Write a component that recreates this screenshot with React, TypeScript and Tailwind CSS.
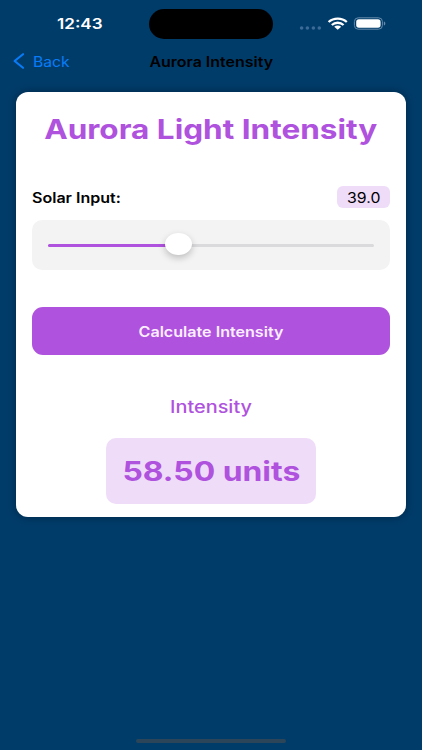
import React from "react";

function StatusBar() {
  return (
    <div className="flex h-[47px] items-start">
      <div className="flex h-[49px] w-[149px] items-center pl-[57px]">
        <span className="origin-left scale-x-[1.14] text-[15px] font-semibold whitespace-nowrap text-white">12:43</span>
      </div>
      <div className="mt-[9px] h-[30px] w-[124px] rounded-full bg-black" />
      <div className="flex h-[47px] flex-1 items-center pl-[26px]">
        <svg width="90" height="16" viewBox="0 0 90 16" fill="none">
          <g fill="#3b6b96">
            <circle cx="2.6" cy="12" r="1.8" />
            <circle cx="8.4" cy="12" r="1.8" />
            <circle cx="14.4" cy="12" r="1.8" />
            <circle cx="20.3" cy="12" r="1.8" />
          </g>
          <g stroke="#fff" strokeWidth="2.3">
            <path d="M29.6 6C34.6 1.4 42.8 1.4 47.8 6" />
            <path d="M32.8 9C36.2 6 41.2 6 44.6 9" />
          </g>
          <path d="M35.2 10.8C37.2 9 40.2 9 42.2 10.8L38.7 13.8Z" fill="#fff" />
          <rect x="55.4" y="1.8" width="28" height="11.4" rx="3.8" stroke="#668bab" />
          <rect x="57.2" y="3.3" width="24.4" height="8.4" rx="2.6" fill="#fff" />
          <path d="M84.9 5.5C86.8 5.9 86.8 9.1 84.9 9.5Z" fill="#668bab" />
        </svg>
      </div>
    </div>
  );
}

function NavBar() {
  return (
    <div className="flex h-[28px] items-center text-[14px]">
      <div className="flex w-[149px] items-center pl-[13px] text-[#087cf8]">
        <svg width="12" height="16" viewBox="0 0 12 16" fill="none" stroke="currentColor" strokeWidth="2.1" strokeLinecap="round" strokeLinejoin="round">
          <path d="M10 1.2L1.6 8L10 14.8" />
        </svg>
        <span className="ml-[8px] origin-left scale-x-[1.12] whitespace-nowrap">Back</span>
      </div>
      <div className="flex w-[124px] justify-center">
        <span className="scale-x-[1.14] font-semibold whitespace-nowrap text-black">Aurora Intensity</span>
      </div>
    </div>
  );
}

function Slider({ value }: { value: number }) {
  return (
    <div className="mt-[12px] flex h-[50px] items-center rounded-[10px] bg-[#f3f3f3] px-4">
      <div className="relative h-[3px] w-full rounded-full bg-[#dadadc]">
        <div className="h-full rounded-full bg-[#af52de]" style={{ width: `${value}%` }} />
        <div className="absolute top-[-11px] left-[117px] h-[22px] w-[27px] rounded-[50%] bg-white shadow-[0_3px_7px_rgba(0,0,0,0.22)]" />
      </div>
    </div>
  );
}

export default function App() {
  return (
    <div className="flex h-[750px] w-[422px] flex-col overflow-hidden bg-[#003c6a] font-[Inter,sans-serif]">
      <StatusBar />
      <NavBar />
      <main className="mx-4 mt-[17px] flex h-[425px] flex-col rounded-[12px] bg-white px-4 shadow-[0_0_10px_rgba(0,0,0,0.35)]">
        <h1 className="mt-[18px] flex h-10 items-center justify-center">
          <span className="scale-x-[1.167] text-[27px] font-bold whitespace-nowrap text-[#af52de]">Aurora Light Intensity</span>
        </h1>
        <div className="mt-[36px] flex h-[22px] items-center justify-between">
          <span className="origin-left scale-x-[1.145] text-[14px] font-semibold whitespace-nowrap text-black">Solar Input:</span>
          <div className="flex h-[22px] w-[53px] items-center justify-center rounded-[6px] bg-[#efdcf8]">
            <span className="scale-x-[1.13] text-[14px] text-black">39.0</span>
          </div>
        </div>
        <Slider value={40} />
        <button className="mt-[37px] flex h-[48px] items-center justify-center rounded-[11px] bg-[#af52de]">
          <span className="scale-x-[1.15] text-[14px] font-semibold whitespace-nowrap text-[#fbeeff]">Calculate Intensity</span>
        </button>
        <div className="mt-[41px] flex h-6 items-center justify-center">
          <span className="scale-x-[1.17] text-[17px] font-medium text-[#af52de]">Intensity</span>
        </div>
        <div className="mt-[18px] flex h-[66px] w-[210px] items-center justify-center self-center rounded-[10px] bg-[#efdcf8] pt-[2px]">
          <span className="scale-x-[1.18] text-[27px] font-bold whitespace-nowrap text-[#af52de]">58.50 units</span>
        </div>
      </main>
      <div className="mt-auto mb-[7px] h-[4px] w-[150px] self-center rounded-full bg-[#2c4559]" />
    </div>
  );
}
